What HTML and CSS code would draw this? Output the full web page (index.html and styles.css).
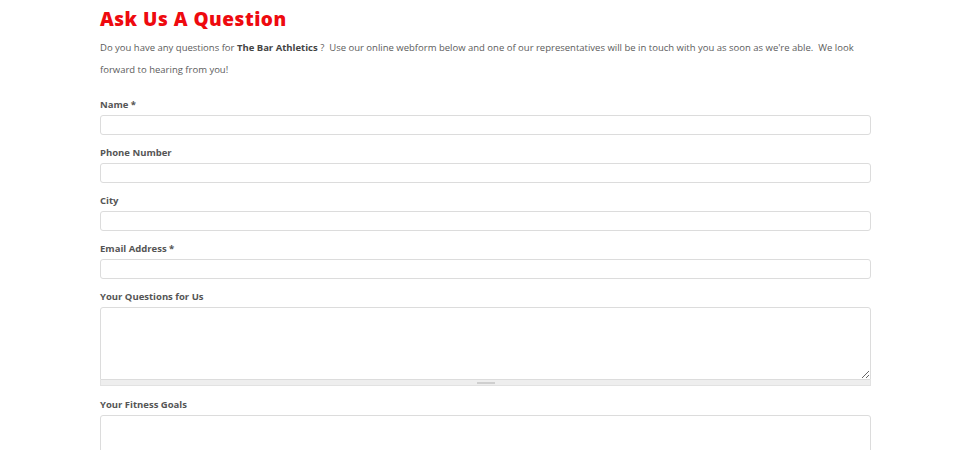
FILE: index.html
```html
<!DOCTYPE html>
<html lang="en">
<head>
    <meta charset="UTF-8">
    <meta name="viewport" content="width=device-width, initial-scale=1.0">
    <title>Ask Us A Question</title>
    <link rel="stylesheet" href="styles.css">
</head>
<body>
    <div class="page">
        <h1>Ask Us A Question</h1>
        <p class="intro">Do you have any questions for <b>The Bar Athletics</b> ?&nbsp; Use our online webform below and one of our representatives will be in touch with you as soon as we're able.&nbsp; We look forward to hearing from you!</p>

        <form class="webform">
            <label class="field">
                <span class="field-label">Name *</span>
                <input type="text">
            </label>
            <label class="field">
                <span class="field-label">Phone Number</span>
                <input type="text">
            </label>
            <label class="field">
                <span class="field-label">City</span>
                <input type="text">
            </label>
            <label class="field">
                <span class="field-label">Email Address *</span>
                <input type="text">
            </label>
            <div class="field">
                <span class="field-label">Your Questions for Us</span>
                <textarea></textarea>
                <div class="grippie"><span></span></div>
            </div>
            <div class="field">
                <span class="field-label">Your Fitness Goals</span>
                <textarea></textarea>
                <div class="grippie"><span></span></div>
            </div>
        </form>
    </div>
</body>
</html>
```

FILE: styles.css
```css
body {
    margin: 0;
    background-color: #fff;
    font-family: 'Open Sans', sans-serif;
    color: #555;
}

.page {
    width: 771px;
    margin: 0 0 0 100px;
    padding-top: 7px;
}

h1 {
    font-family: 'Open Sans', sans-serif;
    font-weight: 800;
    font-size: 19px;
    color: #ee0a0f;
    margin: 0 0 6px;
    line-height: 24px;
    letter-spacing: 0.5px;
}

.intro {
    font-size: 9.5px;
    line-height: 22px;
    margin: 0 0 17px;
    color: #5c5c5c;
}

.intro b {
    color: #444;
}

.webform {
    display: flex;
    flex-direction: column;
    gap: 11px;
}

.field {
    display: flex;
    flex-direction: column;
}

.field-label {
    font-size: 9.5px;
    font-weight: 700;
    color: #555;
    line-height: 13px;
    margin-bottom: 4px;
}

.field input,
.field textarea {
    box-sizing: border-box;
    width: 100%;
    border: 1px solid #dcdcdc;
    border-radius: 3px;
    background: #fff;
    margin: 0;
    font-family: inherit;
}

.field input {
    height: 20px;
}

.field textarea {
    height: 73px;
    resize: vertical;
    border-radius: 3px 3px 0 0;
    display: block;
}

.grippie {
    height: 5px;
    background-color: #eeeeee;
    border: 1px solid #e2e2e2;
    border-top: none;
    display: flex;
    justify-content: center;
    align-items: center;
    margin-bottom: 1px;
}

.grippie span {
    width: 18px;
    height: 2px;
    background-color: #cfcfcf;
}
```
